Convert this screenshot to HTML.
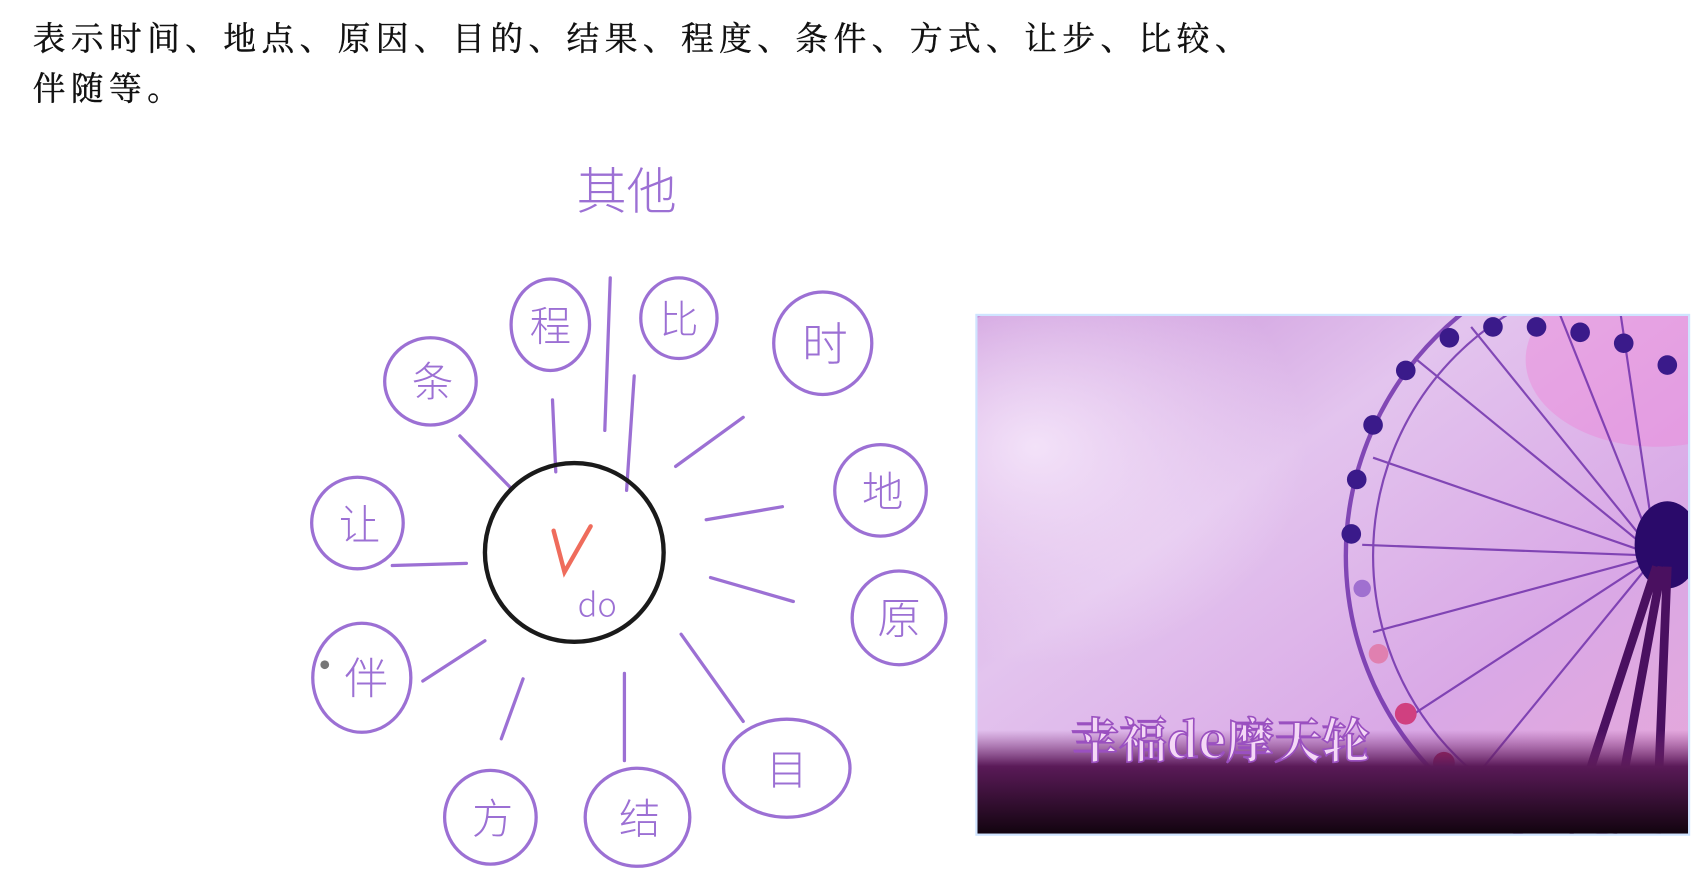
<!DOCTYPE html>
<html><head><meta charset="utf-8"><style>
html,body{margin:0;padding:0;background:#fff;width:1700px;height:887px;overflow:hidden}
svg{display:block}
</style></head><body>
<svg width="1700" height="887" viewBox="0 0 1560 814" preserveAspectRatio="none" xmlns="http://www.w3.org/2000/svg">
<defs>
<linearGradient id="sky" x1="0" y1="0" x2="1" y2="1">
<stop offset="0" stop-color="#c88fd8"/><stop offset="0.35" stop-color="#e3c4ee"/><stop offset="0.7" stop-color="#d9a8e6"/><stop offset="1" stop-color="#e8a7d8"/>
</linearGradient>
<radialGradient id="cl" cx="0.3" cy="0.4" r="0.5"><stop offset="0" stop-color="#f6e8fb" stop-opacity="0.9"/><stop offset="1" stop-color="#f6e8fb" stop-opacity="0"/></radialGradient>
<linearGradient id="grass" x1="0" y1="0" x2="0" y2="1"><stop offset="0" stop-color="#7a2a78" stop-opacity="0"/><stop offset="0.35" stop-color="#5a1a58"/><stop offset="1" stop-color="#12040f"/></linearGradient>
<clipPath id="ic"><rect x="897" y="290" width="652" height="475"/></clipPath>
</defs>
<g font-family="'Liberation Serif','Noto Serif CJK SC',serif" font-size="30" fill="#111" letter-spacing="5" stroke="#111" stroke-width="0.4">
<text x="30" y="46">表示时间、地点、原因、目的、结果、程度、条件、方式、让步、比较、</text>
<text x="30" y="92">伴随等。</text>
</g>
<g fill="none" stroke="#9c70d4" stroke-width="3" stroke-linecap="round">
<ellipse cx="505" cy="298" rx="36" ry="42"/>
<ellipse cx="623" cy="292" rx="35" ry="37"/>
<ellipse cx="755" cy="315" rx="45" ry="47"/>
<ellipse cx="395" cy="350" rx="42" ry="40"/>
<ellipse cx="808" cy="450" rx="42" ry="42"/>
<ellipse cx="328" cy="480" rx="42" ry="42"/>
<ellipse cx="825" cy="567" rx="43" ry="43"/>
<ellipse cx="332" cy="622" rx="45" ry="50"/>
<ellipse cx="722" cy="705" rx="58" ry="45"/>
<ellipse cx="450" cy="750" rx="42" ry="43"/>
<ellipse cx="585" cy="750" rx="48" ry="45"/>
<path d="M422 400L468 447M507 367L510 433M560 255L555 395M582 345L575 450M682 383L620 428M718 465L648 477M652 530L728 552M625 582L682 662M573 618L573 698M480 623L460 678M445 588L388 625M428 517L360 519"/>
</g>
<ellipse cx="527" cy="507" rx="82" ry="82" fill="none" stroke="#1a1a1a" stroke-width="4"/>
<path d="M508 487L518 525L542 483" fill="none" stroke="#ef6c5c" stroke-width="4" stroke-linecap="round"/>
<g font-family="'Noto Sans CJK SC',sans-serif" font-weight="300" fill="#9c70d4" text-anchor="middle">
<text x="575" y="192" font-size="46">其他</text>
<text x="548" y="566" font-size="30">do</text>
<text x="505" y="313" font-size="38">程</text>
<text x="623" y="306" font-size="36">比</text>
<text x="757" y="331" font-size="42">时</text>
<text x="397" y="364" font-size="38">条</text>
<text x="810" y="465" font-size="38">地</text>
<text x="330" y="495" font-size="38">让</text>
<text x="825" y="582" font-size="40">原</text>
<text x="336" y="637" font-size="40">伴</text>
<text x="722" y="720" font-size="38">目</text>
<text x="452" y="765" font-size="38">方</text>
<text x="587" y="765" font-size="38">结</text>
</g>
<circle cx="298" cy="610" r="4" fill="#777"/>
<rect x="895" y="288" width="656" height="479" fill="#cfe4ff"/>
<g clip-path="url(#ic)">
<rect x="897" y="290" width="652" height="475" fill="url(#sky)"/>
<ellipse cx="1050" cy="450" rx="250" ry="200" fill="url(#cl)"/>
<ellipse cx="1520" cy="330" rx="120" ry="80" fill="#f080d8" opacity="0.4"/>
<g fill="none" stroke="#6a2aa8" stroke-width="2" opacity="0.8">
<circle cx="1520" cy="510" r="285" stroke-width="4"/>
<circle cx="1520" cy="510" r="260"/>
<path d="M1520 510L1300 330M1520 510L1350 300M1520 510L1420 260M1520 510L1260 420M1520 510L1250 500M1520 510L1260 580M1520 510L1290 660M1520 510L1340 730M1520 510L1480 240"/>
</g>
<g fill="#3a1a8a">
<circle cx="1260" cy="390" r="9"/><circle cx="1290" cy="340" r="9"/><circle cx="1330" cy="310" r="9"/><circle cx="1370" cy="300" r="9"/><circle cx="1410" cy="300" r="9"/><circle cx="1450" cy="305" r="9"/><circle cx="1490" cy="315" r="9"/><circle cx="1530" cy="335" r="9"/><circle cx="1245" cy="440" r="9"/><circle cx="1240" cy="490" r="9"/>
<circle cx="1250" cy="540" r="8" fill="#a070d0"/><circle cx="1265" cy="600" r="9" fill="#e080b0"/><circle cx="1290" cy="655" r="10" fill="#d04080"/><circle cx="1325" cy="700" r="10" fill="#b02050"/>
<ellipse cx="1530" cy="500" rx="30" ry="40" fill="#2a0a6a"/>
</g>
<path d="M1520 520L1440 765M1525 520L1480 765M1530 520L1520 765" stroke="#4a1060" stroke-width="8"/>
<rect x="897" y="670" width="652" height="95" fill="url(#grass)"/>
<text x="1120" y="695" font-family="'Noto Serif CJK SC',serif" font-size="44" font-weight="bold" fill="#f4d8f6" stroke="#9a50c0" stroke-width="1.5" text-anchor="middle">幸福de摩天轮</text>
</g>
</svg>
</body></html>
